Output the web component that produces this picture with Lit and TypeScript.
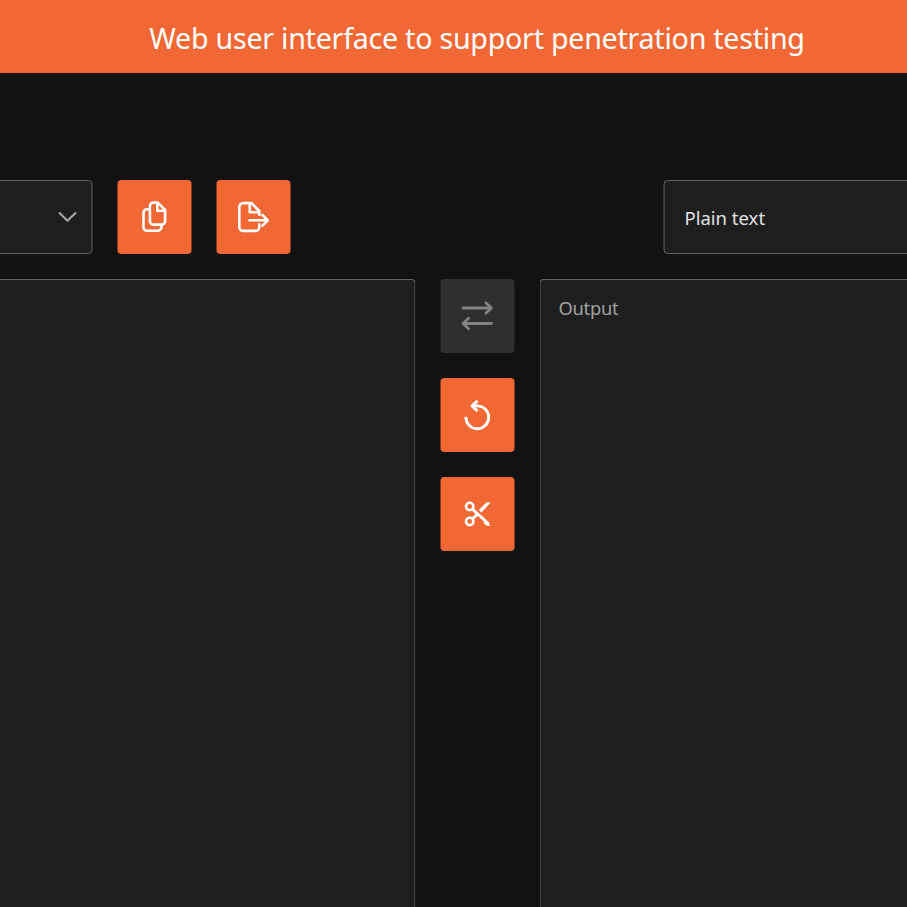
import { LitElement, html, css, svg } from "lit";
import { customElement, property } from "lit/decorators.js";

const icons = {
  copy: svg`
    <path d="M35.300 22.600h5l7.300 7.300v11.300a3.400 3.400 0 0 1-3.400 3.400h-8.400a3.400 3.400 0 0 1-3.400-3.400v-15.200a3.400 3.400 0 0 1 3.400-3.400z"/>
    <path d="M39.800 23v7.800h7.800"/>
    <path d="M32 29.200h-2.400a3.600 3.600 0 0 0-3.600 3.600v14.400a3.600 3.600 0 0 0 3.600 3.600h10.400a4 4 0 0 0 4-4v-2"/>`,
  fileExport: svg`
    <path d="M42.800 36v-5l-7.800-7.900h-8.200a4 4 0 0 0-4 4v19.800a4 4 0 0 0 4 4h12a4 4 0 0 0 4-4v-3.600"/>
    <path d="M33.200 23.500v8.700h9.600"/>
    <path d="M33 40.300h18M46 34.900l5.300 5.400l-5.300 5.400" stroke-linecap="round"/>`,
  swap: svg`
    <path d="M22.500 29h28M45.300 23.800l5.600 5.200l-5.600 5.200M51 44.500H22.500M28.100 39.300l-5.600 5.200l5.600 5.200" stroke-linecap="round" stroke-width="2.800"/>`,
  undo: svg`
    <path d="M25.400 38.900a11.400 11.400 0 1 0 11.400-11h-5" stroke-width="2.900"/>
    <path d="M37 22.900l-5.500 5l5.500 5.200" stroke-width="2.900"/>`,
  scissors: svg`
    <circle cx="29.200" cy="29.500" r="3.700"/>
    <circle cx="29.200" cy="44.500" r="3.700"/>
    <path d="M31.900 32.200l16.300 14.800M31.900 41.900l4.600-4.200" stroke-width="3"/>
    <path d="M50.200 25.600h-4.300l-7.600 7.400 2.600 2.400z" fill="currentColor" stroke="none"/>
    <path d="M50.200 48.700h-4.300l-3-3 2.600-2z" fill="currentColor" stroke="none"/>`,
};

@customElement("tool-button")
class ToolButton extends LitElement {
  @property() icon: keyof typeof icons = "copy";
  @property({ type: Boolean, reflect: true }) disabled = false;

  static styles = css`
    :host { display: block; flex: none; width: 74px; height: 74px; }
    .button {
      display: block; width: 74px; height: 74px; padding: 0; border: 0;
      border-radius: 4px; background: #f26835; color: #fff;
    }
    .button:disabled { background: #2f2f2f; color: #838383; }
    .icon {
      display: block; width: 74px; height: 74px; fill: none;
      stroke: currentColor; stroke-width: 2.600; stroke-linejoin: round;
    }
  `;

  render() {
    return html`<button class="button" ?disabled=${this.disabled}>
      <svg class="icon" viewBox="0 0 74 74">${icons[this.icon]}</svg>
    </button>`;
  }
}

@customElement("app-root")
class AppRoot extends LitElement {
  static styles = css`
    :host {
      display: block; height: 907px; overflow: hidden; background: #121212;
      font-family: "Noto Sans", "Open Sans", sans-serif; color: #e2e2e2;
    }
    * { box-sizing: border-box; }
    .page { width: 954px; height: 907px; display: flex; flex-direction: column; }
    .header {
      height: 73px; flex: none; display: flex; align-items: center; justify-content: center;
      background: #f26835; color: #fff;
    }
    .title { margin: 0; font-size: 28.600px; letter-spacing: -0.240px; font-weight: 400; line-height: 40px; white-space: nowrap; padding-top: 2px; }
    .content { flex: 1; padding-top: 107px; display: flex; flex-direction: column; gap: 25px; transform: translateX(0.5px); }
    .toolbar { display: flex; gap: 25px; height: 74px; flex: none; margin-left: -20px; }
    .select {
      flex: none; border: 1px solid #626262; border-radius: 4px; background: #1e1e1e;
      display: flex; align-items: center;
    }
    .source { width: 112px; justify-content: flex-end; padding-right: 14px; }
    .target { width: 320px; margin-left: 348px; padding: 1px 0 0 20px; font-size: 18.500px; }
    .chevron { width: 20px; height: 14px; fill: none; stroke: #a9a9a9; stroke-width: 2; stroke-linecap: round; stroke-linejoin: round; }
    .editors { flex: 1; display: grid; grid-template-columns: 435px 74px 435px; gap: 25px; margin-left: -20px; }
    .panel { border: 1px solid #626262; border-bottom: 0; border-radius: 4px 4px 0 0; background: #1e1e1e; }
    .output { padding: 15px 18px; font-size: 18.300px; letter-spacing: -0.250px; line-height: 26px; color: #a1a1a1; }
    .actions { display: flex; flex-direction: column; gap: 25px; }
  `;

  render() {
    return html`
      <div class="page">
        <header class="header"><h1 class="title">Web user interface to support penetration testing</h1></header>
        <main class="content">
          <div class="toolbar">
            <div class="select source">
              <svg class="chevron" viewBox="0 0 20 14"><path d="M2 3l8 7.700L18 3"/></svg>
            </div>
            <tool-button icon="copy"></tool-button>
            <tool-button icon="fileExport"></tool-button>
            <div class="select target">Plain text</div>
          </div>
          <div class="editors">
            <div class="panel"></div>
            <div class="actions">
              <tool-button icon="swap" disabled></tool-button>
              <tool-button icon="undo"></tool-button>
              <tool-button icon="scissors"></tool-button>
            </div>
            <div class="panel output">Output</div>
          </div>
        </main>
      </div>`;
  }
}
